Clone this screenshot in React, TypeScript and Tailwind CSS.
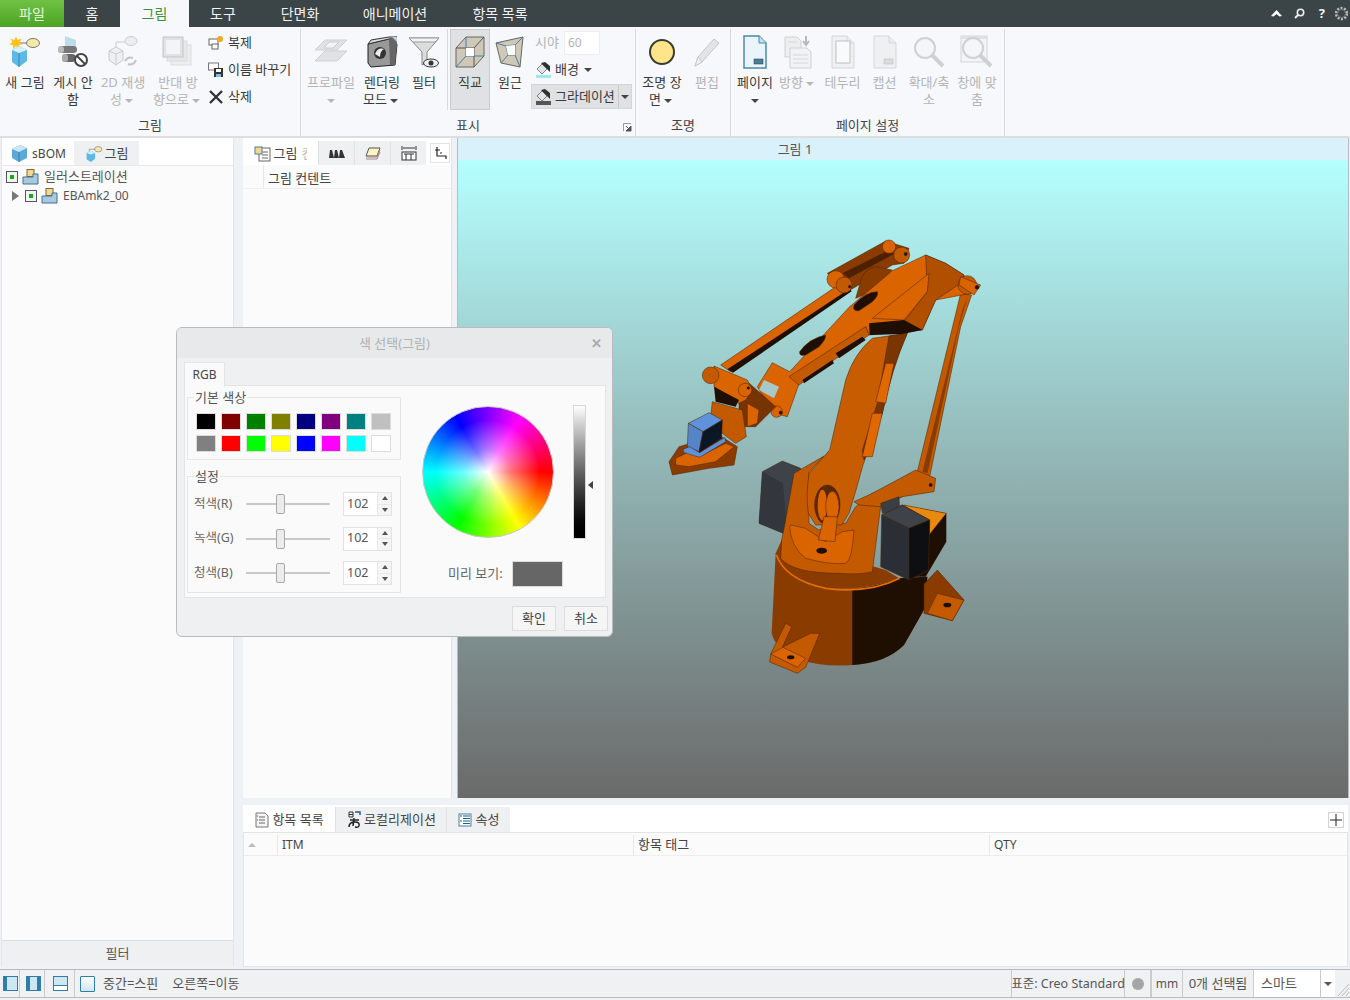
import React from "react";

const FONT = "font-['Noto_Sans','Noto_Sans_CJK_KR',sans-serif]";

// ---- small ribbon icons ----
const NewViewIcon = () => (
  <svg width="34" height="34" viewBox="0 0 34 34">
    <ellipse cx="25" cy="8" rx="6.5" ry="4.5" fill="#f6e9a8" stroke="#777" />
    <path d="M8 8 L19 8" stroke="#777" />
    <path d="M8 1 L9.5 5 L14 3.5 L11.5 7 L15 9.5 L11 10 L11 14 L8 11 L5 14 L5 10 L1 9.5 L4.5 7 L2 3.5 L6.5 5Z" fill="#ffc21c" />
    <path d="M4 15 L11 11 L19 15 L19 26 L11 32 L4 27Z" fill="#5db8e6" />
    <path d="M4 15 L11 18 L19 15 L11 11Z" fill="#d7effa" />
    <path d="M11 18 L11 32" stroke="#2d88bb" />
  </svg>
);
const UnpublishIcon = () => (
  <svg width="34" height="34" viewBox="0 0 34 34">
    <path d="M9 1 L20 5 L20 14 L9 11Z" fill="#bcdcec" />
    <rect x="2" y="11" width="19" height="7" rx="3.5" fill="#777" />
    <rect x="6" y="19" width="14" height="8" rx="4" fill="#666" />
    <rect x="2" y="11" width="6" height="7" rx="3" fill="#bbb" />
    <rect x="6" y="19" width="6" height="8" rx="3" fill="#aaa" />
    <circle cx="25" cy="25" r="6" fill="#fff" stroke="#444" strokeWidth="2" />
    <path d="M21 21 L29 29" stroke="#444" strokeWidth="2" />
  </svg>
);
const Regen2DIcon = () => (
  <svg width="34" height="34" viewBox="0 0 34 34" opacity=".4">
    <ellipse cx="25" cy="6" rx="6" ry="4.5" fill="#ddd" stroke="#888" />
    <path d="M10 7 L19 7 M10 7 L10 13" stroke="#888" />
    <path d="M3 16 L10 12 L17 16 L17 25 L10 30 L3 25Z" fill="#e6e6e6" stroke="#888" />
    <path d="M3 16 L10 19 L17 16 M10 19 L10 30" stroke="#888" fill="none" />
    <path d="M19 26 Q22 21 27 23 M30 25 Q27 31 22 29" stroke="#777" strokeWidth="2" fill="none" />
  </svg>
);
const FlipIcon = () => (
  <svg width="34" height="34" viewBox="0 0 34 34" opacity=".35">
    <rect x="10" y="10" width="20" height="20" fill="#ddd" stroke="#aaa" />
    <rect x="6" y="6" width="20" height="20" fill="#ccc" stroke="#aaa" />
    <rect x="2" y="2" width="20" height="20" fill="#bbb" stroke="#666" />
    <rect x="5" y="5" width="14" height="14" fill="#eee" />
  </svg>
);
const ProfileIcon = () => (
  <svg width="36" height="30" viewBox="0 0 36 30" opacity=".35">
    <path d="M12 3 L34 3 L24 13 L2 13Z M12 14 L34 14 L24 24 L2 24Z" fill="#bbb" stroke="#888" />
    <path d="M16 5 L26 5 L20 11 L11 11Z" fill="#eee" stroke="#777" />
  </svg>
);
const RenderIcon = () => (
  <svg width="34" height="34" viewBox="0 0 34 34">
    <path d="M3 9 L24 4 L32 9 L30 30 L6 32 L3 28Z" fill="#999" stroke="#222" />
    <path d="M3 9 L24 4 L32 2 L24 2 L6 5Z" fill="#ddd" stroke="#333" />
    <path d="M24 4 L32 2 L32 9 L30 30 L25 30Z" fill="#666" />
    <path d="M27 2 L32 2 L32 7Z" fill="#b9d1dc" />
    <circle cx="15" cy="18" r="6" fill="#333" />
    <path d="M10 19 Q13 12 19 14 Q15 16 15 22Z" fill="#eee" />
  </svg>
);
const FilterIcon = () => (
  <svg width="34" height="34" viewBox="0 0 34 34">
    <path d="M2 3 L32 3 L20 17 L20 28 L15 30 L15 17Z" fill="#dcdcdc" stroke="#888" />
    <path d="M2 3 L32 3 L28 7 L6 7Z" fill="#f3f3f3" stroke="#999" />
    <ellipse cx="24" cy="28" rx="7.5" ry="4" fill="#eee" stroke="#333" />
    <circle cx="24" cy="28" r="2.5" fill="#333" />
  </svg>
);
const OrthoIcon = () => (
  <svg width="30" height="32" viewBox="0 0 30 32">
    <path d="M1 12 L11 1 L29 1 L29 20 L19 31 L1 31Z" fill="#cfc8b6" stroke="#666" />
    <path d="M1 12 L19 12 L19 31 M19 12 L29 1" fill="none" stroke="#555" />
    <path d="M11 1 L11 20 L1 31 M11 20 L29 20" fill="none" stroke="#3f7fb5" />
    <path d="M11 12 L19 12 L19 20 L11 20Z" fill="#fff" />
  </svg>
);
const PerspIcon = () => (
  <svg width="30" height="32" viewBox="0 0 30 32">
    <path d="M1 7 L28 1 L25 31 L6 27Z" fill="#cfc8b6" stroke="#666" />
    <path d="M1 7 L11 10 L20 9 L28 1 M11 10 L13 19 L6 27 M20 9 L20 19 L25 31 M13 19 L20 19" fill="none" stroke="#4b7ea8" />
    <path d="M11 10 L20 9 L20 19 L13 19Z" fill="#fff" />
  </svg>
);
const PaintIcon = ({ base = "#9ee7f2", tall = false }: { base?: string; tall?: boolean }) => (
  <svg width="17" height="17" viewBox="0 0 17 17">
    <path d="M2 8 L7 3 L12 8 L7 13Z" fill="#e4e4e4" stroke="#666" strokeWidth=".8" />
    <path d="M6 2 L10 1 L15 5 L15 11 L12 8 Z" fill="#2e3236" />
    <rect x="1" y={tall ? 13 : 14} width="15" height={tall ? 4 : 3} fill={base} />
  </svg>
);
const LightIcon = () => (
  <svg width="28" height="28" viewBox="0 0 28 28">
    <circle cx="14" cy="14" r="12" fill="#ffe58a" stroke="#3b3b30" strokeWidth="2" />
  </svg>
);
const PencilIcon = () => (
  <svg width="28" height="32" viewBox="0 0 28 32" opacity=".45">
    <path d="M2 30 L5 21 L21 3 L26 7 L9 26Z" fill="#ccc" stroke="#888" />
    <path d="M2 30 L5 21 L9 26Z" fill="#eee" stroke="#888" />
  </svg>
);
const PageIcon = ({ dim = false, tag = false, inner = false }: { dim?: boolean; tag?: boolean; inner?: boolean }) => (
  <svg width="24" height="34" viewBox="0 0 24 34" opacity={dim ? 0.35 : 1}>
    <path d="M1 1 L16 1 L23 8 L23 33 L1 33Z" fill={dim ? "#e4e4e4" : "#eaf5fb"} stroke={dim ? "#999" : "#4a8aac"} strokeWidth={dim ? 1 : 1.5} />
    <path d="M16 1 L16 8 L23 8" fill="#c4dfee" stroke={dim ? "#999" : "#4a8aac"} />
    {inner && <rect x="5" y="6" width="14" height="22" fill="#fff" stroke="#555" />}
    {tag && <rect x="11" y="24" width="9" height="5" fill={dim ? "#aaa" : "#4a7f9c"} stroke="#333" strokeWidth=".5" />}
  </svg>
);
const OrientIcon = () => (
  <svg width="28" height="34" viewBox="0 0 28 34" opacity=".35">
    <path d="M1 2 L13 2 L17 6 L17 22 L1 22Z" fill="#ddd" stroke="#888" />
    <path d="M6 13 L23 13 L27 17 L27 33 L6 33Z" fill="#e8e8e8" stroke="#888" />
    <path d="M9 20 L24 20 M9 24 L24 24 M9 28 L24 28 M4 7 L13 7" stroke="#999" />
    <path d="M22 1 L22 8 M19 6 L22 10 L25 6" stroke="#444" strokeWidth="2" fill="none" />
  </svg>
);
const ZoomIcon = ({ frame = false }: { frame?: boolean }) => (
  <svg width="34" height="34" viewBox="0 0 34 34" opacity=".3">
    {frame && <rect x="1" y="1" width="26" height="26" fill="#eee" stroke="#888" />}
    {frame && <rect x="1" y="1" width="26" height="3" fill="#aaa" />}
    <circle cx="13" cy="13" r="10" fill="#f3f3f3" stroke="#777" strokeWidth="2" />
    <path d="M20 20 L31 31" stroke="#777" strokeWidth="4" />
  </svg>
);
const ViewSmallIcon = () => (
  <svg width="18" height="18" viewBox="0 0 34 34">
    <ellipse cx="25" cy="8" rx="7" ry="5" fill="#f6e9a8" stroke="#666" />
    <path d="M8 8 L19 8 M8 8 L8 13" stroke="#666" />
    <path d="M3 15 L11 11 L19 15 L19 26 L11 32 L3 27Z" fill="#5db8e6" />
    <path d="M3 15 L11 18 L19 15 L11 11Z" fill="#d7effa" />
  </svg>
);
const CubeIcon = () => (
  <svg width="17" height="17" viewBox="0 0 17 17">
    <path d="M1 4 L9 0 L16 3 L16 13 L8 17 L1 13Z" fill="#5aa9d8" />
    <path d="M1 4 L9 0 L16 3 L8 7Z" fill="#cbe7f6" />
    <path d="M8 7 L8 17" stroke="#2f7ea9" />
  </svg>
);
const TreeIcons = () => (
  <span className="flex items-center gap-[4px]">
    <span className="flex h-[12px] w-[12px] items-center justify-center border border-[#556] bg-[#f3f3f3]">
      <span className="h-[4px] w-[4px] bg-[#10b010]" />
    </span>
    <svg width="17" height="16" viewBox="0 0 17 16">
      <rect x="5" y="0.5" width="7" height="7" fill="#f1d88d" stroke="#7a6a3a" />
      <path d="M1 8 L11 8 L11 5 L16 5 L16 15 L1 15Z" fill="#a8c9de" stroke="#466f8c" />
    </svg>
  </span>
);

const Caret = ({ dim = false }: { dim?: boolean }) => (
  <span className={`mx-[3px] inline-block h-0 w-0 border-x-[4px] border-t-[4px] border-x-transparent align-middle ${dim ? "border-t-[#b5b5b5]" : "border-t-[#444]"}`} />
);

// ---- ribbon parts ----
function RibbonButton({
  icon,
  lines,
  width,
  dim = false,
  caret = false,
  active = false,
}: {
  icon: React.ReactNode;
  lines: string[];
  width: string;
  dim?: boolean;
  caret?: boolean;
  active?: boolean;
}) {
  return (
    <div className={`flex shrink-0 flex-col items-center ${width} ${active ? "h-[81px] border border-[#c9cbcd] bg-[#dfe1e3]" : ""}`}>
      <div className={`flex items-center justify-center ${active ? "h-[44px]" : "h-[45px]"}`}>{icon}</div>
      <div className={`text-center text-[13px] leading-[17px] ${dim ? "text-[#b4b4b4]" : "text-[#3a3a3a]"}`}>
        {lines.map((l, i) => (
          <div key={i} className="whitespace-nowrap">
            {l}
            {caret && i === lines.length - 1 && <Caret dim={dim} />}
          </div>
        ))}
      </div>
    </div>
  );
}

function SmallAction({ icon, label }: { icon: React.ReactNode; label: string }) {
  return (
    <div className="flex h-[27px] items-center gap-[3px] text-[13px] text-[#3a3a3a]">
      <span className="flex w-[18px] justify-center">{icon}</span>
      {label}
    </div>
  );
}

function RibbonGroup({ width, label, children, launcher = false }: { width: string; label: string; children: React.ReactNode; launcher?: boolean }) {
  return (
    <div className={`relative flex h-[108px] shrink-0 flex-col border-r border-[#d6d8da] ${width}`}>
      <div className="flex h-[86px] items-start">{children}</div>
      <div className="flex h-[20px] items-center justify-center pt-[1px] text-[13px] text-[#444]">{label}</div>
      {launcher && (
        <svg className="absolute right-[3px] bottom-[5px]" width="9" height="9" viewBox="0 0 9 9">
          <path d="M0.5 8 L0.5 0.5 L8 0.5" fill="none" stroke="#999" />
          <path d="M3 3 L7 7 M8 3 L8 8 L3 8Z" stroke="#555" fill="#555" />
        </svg>
      )}
    </div>
  );
}

function Tabs() {
  return (
    <div className="flex h-[27px] items-stretch bg-[#3b4446] text-[14px] text-[#f2f2f2]">
      <div className="flex w-[64px] items-center justify-center bg-gradient-to-b from-[#6fc243] to-[#4da325] text-[#e8f5dc]">파일</div>
      <div className="flex w-[56px] items-center justify-center">홈</div>
      <div className="flex w-[69px] items-center justify-center bg-[#f6f8fb] text-[#3f8f3a]">그림</div>
      <div className="flex w-[68px] items-center justify-center">도구</div>
      <div className="flex w-[86px] items-center justify-center">단면화</div>
      <div className="flex w-[104px] items-center justify-center">애니메이션</div>
      <div className="flex w-[106px] items-center justify-center">항목 목록</div>
      <div className="ml-auto flex items-center">
        <svg className="mr-[12px]" width="11" height="7" viewBox="0 0 11 7"><path d="M5.5 0 L11 6 L8.5 6.5 L5.5 4 L2.5 6.5 L0 6Z" fill="#fff" /></svg>
        <svg className="mr-[14px]" width="11" height="11" viewBox="0 0 11 11"><circle cx="6.5" cy="4.5" r="3.2" fill="none" stroke="#eee" strokeWidth="1.6" /><path d="M4 7 L1 10" stroke="#eee" strokeWidth="2" /></svg>
        <span className="mr-[9px] text-[13px] font-bold">?</span>
        <svg className="mr-[1px]" width="15" height="15" viewBox="0 0 15 15"><circle cx="7.5" cy="7.5" r="5.4" fill="none" stroke="#bbb" strokeWidth="2.6" strokeDasharray="2 1.4" /><circle cx="7.5" cy="7.5" r="4" fill="none" stroke="#777" /></svg>
      </div>
    </div>
  );
}

function Ribbon() {
  return (
    <div className="flex h-[111px] items-start border-b-2 border-[#dcdee0] bg-[#f6f8fb] pt-[2px]">
      <RibbonGroup width="w-[301px]" label="그림">
        <div className="w-px" />
        <RibbonButton width="w-[48px]" icon={<NewViewIcon />} lines={["새 그림"]} />
        <RibbonButton width="w-[48px]" icon={<UnpublishIcon />} lines={["게시 안", "함"]} />
        <RibbonButton width="w-[52px]" dim caret icon={<Regen2DIcon />} lines={["2D 재생", "성"]} />
        <RibbonButton width="w-[58px]" dim caret icon={<FlipIcon />} lines={["반대 방", "향으로"]} />
        <div className="flex flex-col">
          <SmallAction
            label="복제"
            icon={
              <svg width="16" height="14" viewBox="0 0 16 14">
                <rect x="1" y="3" width="9" height="6" fill="#fff" stroke="#666" />
                <rect x="4" y="8" width="6" height="5" fill="#fff" stroke="#666" />
                <circle cx="12" cy="3" r="3" fill="#f5a623" />
              </svg>
            }
          />
          <SmallAction
            label="이름 바꾸기"
            icon={
              <svg width="16" height="15" viewBox="0 0 16 15">
                <rect x="0.5" y="1" width="10" height="7" fill="#fff" stroke="#777" />
                <rect x="6" y="6" width="9" height="9" fill="#333" />
                <rect x="8" y="7" width="5" height="3" fill="#fff" />
                <rect x="8" y="12" width="5" height="3" fill="#7cc0e8" />
              </svg>
            }
          />
          <SmallAction
            label="삭제"
            icon={
              <svg width="14" height="14" viewBox="0 0 14 14">
                <path d="M1 1 L13 13 M13 1 L1 13" stroke="#333" strokeWidth="2.4" />
              </svg>
            }
          />
        </div>
      </RibbonGroup>

      <RibbonGroup width="w-[335px]" label="표시" launcher>
        <RibbonButton width="w-[60px]" dim caret icon={<ProfileIcon />} lines={["프로파일", ""]} />
        <RibbonButton width="w-[42px]" caret icon={<RenderIcon />} lines={["렌더링", "모드"]} />
        <RibbonButton width="w-[42px]" icon={<FilterIcon />} lines={["필터"]} />
        <div className="mx-[2px] h-[81px] w-px bg-[#d6d8da]" />
        <RibbonButton width="w-[40px]" active icon={<OrthoIcon />} lines={["직교"]} />
        <RibbonButton width="w-[40px]" icon={<PerspIcon />} lines={["원근"]} />
        <div className="mt-[1px] ml-[1px] flex w-[101px] flex-col text-[13px] text-[#3a3a3a]">
          <div className="flex h-[26px] items-center pl-[4px] text-[#b4b4b4]">
            시야
            <span className="ml-[5px] flex h-[24px] w-[36px] items-center border border-[#eceef0] bg-white pl-[3px] text-[12px]">60</span>
          </div>
          <div className="flex h-[27px] items-center pl-[4px]">
            <PaintIcon />
            <span className="ml-[3px]">배경</span>
            <span className="ml-[2px]"><Caret /></span>
          </div>
          <div className="mt-[1px] flex h-[25px] items-center border border-[#d3d5d7] bg-[#dfe1e3] pl-[3px]">
            <PaintIcon base="#555" tall />
            <span className="ml-[3px]">그라데이션</span>
            <span className="ml-auto flex h-full w-[13px] items-center justify-center border-l border-[#c9cbcd]">
              <span className="h-0 w-0 border-x-[4px] border-t-[4px] border-x-transparent border-t-[#444]" />
            </span>
          </div>
        </div>
      </RibbonGroup>

      <RibbonGroup width="w-[95px]" label="조명">
        <div className="w-[2px]" />
        <RibbonButton width="w-[48px]" caret icon={<LightIcon />} lines={["조명 장", "면"]} />
        <RibbonButton width="w-[42px]" dim icon={<PencilIcon />} lines={["편집"]} />
      </RibbonGroup>

      <RibbonGroup width="w-[274px]" label="페이지 설정">
        <div className="w-[4px]" />
        <RibbonButton width="w-[40px]" caret icon={<PageIcon tag />} lines={["페이지", ""]} />
        <RibbonButton width="w-[46px]" dim caret icon={<OrientIcon />} lines={["방향"]} />
        <RibbonButton width="w-[43px]" dim icon={<PageIcon dim inner />} lines={["테두리"]} />
        <RibbonButton width="w-[41px]" dim icon={<PageIcon dim tag />} lines={["캡션"]} />
        <RibbonButton width="w-[48px]" dim icon={<ZoomIcon />} lines={["확대/축", "소"]} />
        <RibbonButton width="w-[48px]" dim icon={<ZoomIcon frame />} lines={["창에 맞", "춤"]} />
      </RibbonGroup>
    </div>
  );
}

// ---- the robot model ----
function RobotModel() {
  const o = "#d96400";
  const om = "#c45a00";
  const od = "#8a3c00";
  const k = "#1f0f03";
  return (
    <svg width="340" height="450" viewBox="0 0 1020 1350">
      <g stroke="#4a2000" strokeWidth="1.5" strokeLinejoin="round">
        {/* back servo */}
        <path d="M310 725 L370 693 L425 715 L445 890 L385 915 L300 880Z" fill="#3e4249" />
        <path d="M310 725 L300 880 L385 915 L372 760Z" fill="#33363c" stroke="none" />
        {/* base */}
        <path d="M350 970 L338 1210 Q350 1260 420 1290 Q500 1312 580 1305 Q680 1300 735 1245 L800 1130 L805 1040 L720 1045 Q600 1090 470 1070 Q370 1040 350 970Z" fill={od} stroke="none" />
        <path d="M580 1078 L580 1305 Q680 1300 735 1245 L800 1130 L805 1040 L720 1045 Q650 1072 580 1078Z" fill={k} stroke="none" />
        <path d="M350 970 L368 930 L680 1020 L720 1045 Q600 1090 470 1070 Q370 1040 350 970Z" fill={od} stroke="none" />
        <path d="M352 975 Q380 1050 500 1075 Q630 1092 722 1045" fill="none" stroke="#e66c00" strokeWidth="5" />
        {/* side foot right */}
        <path d="M835 1020 L915 1110 L880 1172 L795 1150 L795 1062Z" fill={od} />
        <path d="M835 1090 L915 1110 L880 1172 L805 1150Z" fill={om} />
        <ellipse cx="865" cy="1125" rx="12" ry="7" fill={k} stroke="none" />
        {/* block behind right servo */}
        <path d="M730 825 L862 850 L862 935 L800 1040 L740 1040Z" fill={k} stroke="none" />
        <path d="M735 825 L862 850 L810 915 L730 870Z" fill="#e88a10" />
        {/* foot front */}
        <path d="M380 1180 L398 1190 L370 1252 L455 1210 L482 1210 L440 1312 L415 1330 L332 1296 L335 1272Z" fill={om} />
        <path d="M335 1272 L372 1252 L440 1285 L415 1312Z" fill={o} />
        <ellipse cx="395" cy="1282" rx="11" ry="6" fill={k} stroke="none" />
        {/* cradle */}
        <path d="M405 730 L495 678 L450 725 L450 880 L480 900 L530 880 L560 880 L590 830 L640 790 L725 755 L730 800 L665 830 L640 1025 Q600 1035 540 1030 Q400 1030 365 985 L368 930 L378 880Z" fill={om} />
        <path d="M392 890 Q395 950 440 985 Q510 1005 560 1000 Q580 990 585 900 L550 905 L500 935 L440 895 L395 885Z" fill={o} />
        <ellipse cx="488" cy="962" rx="16" ry="9" fill={k} stroke="none" />
        {/* main column */}
        <path d="M450 730 L512 660 L560 450 Q585 370 640 325 L745 310 Q700 410 670 550 L612 705 Q592 780 570 850 L548 885 L470 885 L448 850 Q440 800 450 730Z" fill="#c85c00" />
        <path d="M690 318 L745 310 Q700 410 670 550 L615 690 L610 660 L655 520 Q672 420 690 318Z" fill="#7a3500" />
        <path d="M680 400 L705 400 L680 520 L650 515Z M640 550 L670 550 L640 680 L610 680Z" fill="#e06800" />
        {/* pivot */}
        <ellipse cx="505" cy="825" rx="38" ry="60" fill="#5a2800" />
        <ellipse cx="490" cy="825" rx="14" ry="46" fill={o} stroke="none" />
        <ellipse cx="520" cy="830" rx="20" ry="46" fill={o} />
        <path d="M495 860 L535 860 L528 935 L478 930Z" fill={o} />
        {/* rear link right */}
        <path d="M905 190 L938 195 L905 290 L812 740 L775 725Z" fill={om} />
        <path d="M910 240 L925 200 L900 290 L806 730 L790 725Z" fill={od} stroke="none" />
        <path d="M585 815 L640 790 L770 720 L830 745 L825 785 L730 800 L665 830 L600 825Z" fill={om} />
        <circle cx="815" cy="765" r="5" fill={k} />
        {/* right servo */}
        <path d="M665 820 L720 800 L722 840 L670 850Z" fill="#3a3e45" />
        <path d="M668 855 L730 825 L812 870 L808 1020 L750 1050 L665 1010Z" fill="#2b2f35" />
        <path d="M668 855 L730 825 L812 870 L750 895Z" fill="#3e4249" />
        <path d="M750 895 L812 870 L808 1020 L750 1050Z" fill="#0d0f12" />
        {/* top rear link */}
        <path d="M505 130 L680 33 L750 55 L735 100 L700 105 L565 185Z" fill={od} />
        <path d="M550 130 L690 60 L705 72 L570 145Z" fill="#4d2100" stroke="none" />
        <path d="M600 170 Q610 115 650 110 L700 120 L640 185 L590 205Z" fill="#8a3c00" />
        <circle cx="690" cy="50" r="20" fill={o} />
        <circle cx="728" cy="75" r="24" fill={om} />
        <circle cx="740" cy="72" r="5" fill={k} />
        {/* upper rod */}
        <path d="M185 405 L545 160 L578 172 L215 425Z" fill={o} />
        <path d="M205 418 L572 176 L578 184 L222 428Z" fill={k} stroke="none" />
        <circle cx="530" cy="148" r="26" fill={o} />
        <circle cx="555" cy="165" r="24" fill={om} />
        <circle cx="572" cy="170" r="4" fill={k} />
        {/* big upper arm */}
        <path d="M340 398 L392 425 L570 232 L700 122 L800 75 L860 100 L915 135 L935 190 L830 210 L790 300 L630 315 L620 290 L525 372 L420 462 L385 560 L340 548 L295 470Z" fill={o} />
        <path d="M800 75 L860 100 L915 135 L905 160 L830 210 L790 300 L735 275 L805 185Z" fill="#b04f00" />
        <path d="M640 265 L810 130 L805 185 L735 270Z" fill="#d96400" />
        <path d="M630 280 L735 270 L790 300 L730 312 L632 315Z" fill={k} stroke="none" />
        <path d="M390 440 L620 290 L630 315 L420 465Z" fill={om} />
        <path d="M530 370 L610 320 L620 330 L540 385Z M430 450 L520 390 L525 400 L435 460Z" fill={k} stroke="none" />
        <path d="M585 225 Q620 185 655 185 Q660 195 640 215 L600 242 Q580 245 585 225Z" fill={k} />
        <path d="M422 365 Q450 325 500 315 Q500 330 480 350 L440 375 Q420 380 422 365Z" fill={k} />
        <path d="M315 450 L360 470 L345 505 L300 480Z" fill="#a8c9c9" stroke="none" />
        <circle cx="353" cy="545" r="17" fill={o} />
        <circle cx="365" cy="548" r="5" fill={k} />
        <circle cx="925" cy="165" r="28" fill={om} />
        <path d="M905 140 L965 165 L945 195 L900 165Z" fill={o} />
        <circle cx="954" cy="172" r="6" fill={k} />
        {/* wrist */}
        <path d="M240 520 L262 452 L350 530 L290 590 L240 590Z" fill="#783400" />
        <path d="M165 408 L265 450 L280 480 L260 510 L240 520 L165 470Z" fill={o} />
        <circle cx="155" cy="436" r="25" fill={om} />
        <circle cx="258" cy="480" r="20" fill={o} />
        <circle cx="268" cy="474" r="4" fill={k} />
        <path d="M160 515 L250 540 L262 620 L230 640 L190 610 L155 560Z" fill={om} />
        <path d="M165 470 L240 510 L230 530 L170 515Z" fill={k} stroke="none" />
        <path d="M265 520 L300 540 L295 580 L265 590Z" fill={o} />
        {/* gripper */}
        <path d="M30 695 L60 650 L180 615 L235 650 L225 705 L150 715 L40 735Z" fill={od} />
        <path d="M50 685 L90 665 L120 680 L200 640 L225 650 L170 695 L90 710 L50 705Z" fill={o} />
        {/* blue servo */}
        <path d="M88 580 L150 548 L190 570 L132 605 Z" fill="#5f92dc" />
        <path d="M88 580 L132 605 L120 665 L85 650Z" fill="#5485c8" />
        <path d="M132 605 L190 570 L188 625 L120 668Z" fill="#0b1725" />
        <path d="M72 658 L92 650 L122 668 L198 622 L200 635 L122 682 L75 668Z" fill="#5f92dc" />
      </g>
    </svg>
  );
}

// ---- colour dialog ----
const swatches = [
  "#000000", "#800000", "#008000", "#808000", "#000080", "#800080", "#008080", "#c0c0c0",
  "#808080", "#ff0000", "#00ff00", "#ffff00", "#0000ff", "#ff00ff", "#00ffff", "#ffffff",
];

function SliderRow({ label }: { label: string }) {
  return (
    <div className="flex h-[24px] items-center">
      <span className="w-[52px] text-[12.5px] text-[#666]">{label}</span>
      <div className="relative h-[2px] w-[84px] bg-[#c8c8c8]">
        <div className="absolute top-[-9px] left-[30px] h-[20px] w-[9px] rounded-[2px] border border-[#aaa] bg-[#ececec]" />
      </div>
      <div className="ml-[13px] flex h-[24px] w-[49px] border border-[#e2e2e2] bg-white">
        <span className="flex w-[33px] items-center pl-[3px] text-[12.5px] text-[#555]">102</span>
        <span className="flex flex-1 flex-col border-l border-[#e8e8e8] bg-[#f5f5f5]">
          <span className="flex flex-1 items-center justify-center border-b border-[#e8e8e8]">
            <span className="h-0 w-0 border-x-[3px] border-b-[4px] border-x-transparent border-b-[#555]" />
          </span>
          <span className="flex flex-1 items-center justify-center">
            <span className="h-0 w-0 border-x-[3px] border-t-[4px] border-x-transparent border-t-[#555]" />
          </span>
        </span>
      </div>
    </div>
  );
}

function ColorDialog() {
  return (
    <div className="absolute top-[189px] left-[176px] z-10 flex h-[310px] w-[437px] flex-col overflow-hidden rounded-[6px] border border-[#b9bbbd] bg-[#eff0f2]">
      <div className="relative flex h-[30px] shrink-0 items-center justify-center bg-[#e8e9eb] pt-[2px] text-[13px] text-[#b0b2b4]">
        색 선택(그림)
        <span className="absolute top-[7px] right-[10px] text-[13px] leading-[16px] font-bold text-[#a8aaac]">✕</span>
      </div>
      <div className="flex h-[24px] px-[7px] pt-[4px]">
        <div className="z-10 flex h-[25px] w-[41px] items-center justify-center border border-b-0 border-[#e4e5e7] bg-[#fafafa] text-[12px] text-[#444]">RGB</div>
      </div>
      <div className="mr-[6px] ml-[7px] mt-[3px] flex h-[213px] border border-[#e4e5e7] bg-[#fafafa] pt-[2px] pl-[2px]">
        <div className="flex w-[214px] flex-col">
          <fieldset className="h-[72px] border border-[#e6e6e6]">
            <legend className="ml-[6px] px-[1px] text-[13px] leading-[19px] text-[#555]">기본 색상</legend>
            <div className="mt-[6px] ml-[8px] grid w-[195px] grid-cols-8 gap-x-[5px] gap-y-[5px]">
              {swatches.map((c) => (
                <div key={c} className="h-[17px] border border-[#dcdcdc]" style={{ backgroundColor: c }} />
              ))}
            </div>
          </fieldset>
          <fieldset className="mt-[7px] h-[126px] border border-[#e6e6e6]">
            <legend className="ml-[6px] px-[1px] text-[13px] leading-[19px] text-[#555]">설정</legend>
            <div className="mt-[6px] ml-[6px] flex flex-col gap-[10.5px]">
              <SliderRow label="적색(R)" />
              <SliderRow label="녹색(G)" />
              <SliderRow label="청색(B)" />
            </div>
          </fieldset>
        </div>
        <div className="ml-[21px] flex flex-col">
          <div className="flex">
            <div className="relative mt-[18px] h-[132px] w-[132px] rounded-full border border-[#c8c8c8] bg-[conic-gradient(from_30deg,#ff00ff,#ff0000,#ffff00,#00ff00,#00ffff,#0000ff,#ff00ff)]">
              <div className="absolute inset-0 rounded-full bg-[radial-gradient(circle_closest-side,#ffffff_0%,rgba(255,255,255,0.45)_35%,rgba(255,255,255,0)_80%)]" />
            </div>
            <div className="mt-[17px] ml-[19px] h-[134px] w-[13px] border border-[#d8d8d8] bg-gradient-to-b from-white to-black" />
            <div className="mt-[93px] ml-[2px] h-0 w-0 border-y-[4px] border-r-[5px] border-y-transparent border-r-[#444]" />
          </div>
          <div className="mt-[22px] flex items-center">
            <span className="ml-[26px] text-[13px] text-[#666]">미리 보기:</span>
            <div className="ml-[9px] h-[26px] w-[51px] border border-[#dcdcdc] bg-[#666666]" />
          </div>
        </div>
      </div>
      <div className="mt-[8px] flex justify-end gap-[8px] pr-[4px]">
        <div className="flex h-[25px] w-[44px] items-center justify-center border border-[#dcdcdc] bg-[#f5f5f5] pt-[1px] text-[13px] text-[#444]">확인</div>
        <div className="flex h-[25px] w-[44px] items-center justify-center border border-[#dcdcdc] bg-[#f5f5f5] pt-[1px] text-[13px] text-[#444]">취소</div>
      </div>
    </div>
  );
}

// ---- panels ----
function LeftPanel() {
  return (
    <div className="mb-[3px] ml-[1px] flex w-[233px] shrink-0 flex-col border-x border-[#e2e4e6] bg-[#fbfbfb]">
      <div className="flex h-[27px] items-end bg-white pl-[1px] text-[13px] text-[#444]">
        <div className="flex h-[24px] w-[71px] items-center justify-center gap-[4px] bg-white pt-[1px]">
          <CubeIcon />
          <span className="text-[12px]">sBOM</span>
        </div>
        <div className="flex h-[24px] w-[65px] items-center justify-center gap-[2px] bg-[#eff0f2] pt-[1px]">
          <ViewSmallIcon />
          그림
        </div>
      </div>
      <div className="flex-1 border-t border-[#e6e8ea] bg-[#fbfbfb] pt-[1px] pl-[4px] text-[13px] text-[#555]">
        <div className="flex h-[19px] items-center gap-[5px]">
          <TreeIcons />
          일러스트레이션
        </div>
        <div className="flex h-[19px] items-center gap-[6px]">
          <span className="ml-[6px] h-0 w-0 border-y-[5px] border-l-[7px] border-y-transparent border-l-[#777]" />
          <span className="flex items-center gap-[5px]">
            <TreeIcons />
            <span className="text-[12px]">EBAmk2_00</span>
          </span>
        </div>
      </div>
      <div className="flex h-[26px] items-center justify-center border-t border-[#dcdee0] bg-[#eff0f2] text-[13px] text-[#555]">필터</div>
    </div>
  );
}

function ContentPanel() {
  return (
    <div className="flex w-[209px] shrink-0 flex-col border-r border-[#e2e4e6] bg-[#fbfbfb]">
      <div className="flex h-[27px] items-end bg-white text-[13px] text-[#444]">
        <div className="flex h-[24px] w-[75px] items-center justify-center gap-[3px] bg-white pt-[1px]">
          <svg width="17" height="16" viewBox="0 0 17 16">
            <rect x="5" y="2" width="11" height="13" fill="#fff" stroke="#666" />
            <path d="M8 6 L14 6 M8 9 L14 9 M8 12 L14 12" stroke="#666" />
            <rect x="1" y="1" width="7" height="7" fill="#f1d88d" stroke="#4a7f9c" />
          </svg>
          그림
          <span className="ml-[1px] w-[6px] overflow-hidden whitespace-nowrap text-[#bbb]">컨</span>
        </div>
        <div className="flex h-[24px] w-[36px] items-center justify-center border-l border-[#e0e2e4] bg-[#eff0f2]">
          <svg width="16" height="9" viewBox="0 0 16 9"><path d="M0 9 L1 1 L3 1 L5 9Z M5 9 L6 1 L8 1 L10 9Z M10 9 L11 1 L13 1 L16 9Z" fill="#333" /></svg>
        </div>
        <div className="flex h-[24px] w-[36px] items-center justify-center border-l border-[#e0e2e4] bg-[#eff0f2]">
          <svg width="16" height="14" viewBox="0 0 16 14"><path d="M4 2 L15 2 L12 10 L1 10Z" fill="#fff3c4" stroke="#555" /><path d="M1 11 L12 11 L15 4 M1 13 L12 13 L15 6" fill="none" stroke="#a88" /></svg>
        </div>
        <div className="flex h-[24px] w-[36px] items-center justify-center border-l border-[#e0e2e4] bg-[#eff0f2]">
          <svg width="16" height="16" viewBox="0 0 16 16"><path d="M1 1 L1 5 M15 1 L15 5 M2 3 L14 3" stroke="#333" /><rect x="1" y="7" width="14" height="8" fill="#fff" stroke="#333" /><path d="M3 9 L13 9 M5 9 L5 15 M10 9 L10 15" stroke="#333" /></svg>
        </div>
        <div className="mb-[2px] ml-[4px] flex h-[20px] w-[20px] items-center justify-center border border-[#e0e2e4] bg-white">
          <svg width="13" height="13" viewBox="0 0 13 13"><path d="M3 0 L3 9 L12 9 L12 12 M1 3 L6 3 M6 6 L8 6" fill="none" stroke="#222" strokeWidth="1.2" /></svg>
        </div>
      </div>
      <div className="flex h-[24px] items-stretch border-b border-[#eeeeee] bg-[#fbfbfb] pl-[20px] text-[13px] text-[#444]">
        <span className="flex items-center border-l border-[#e8e8e8] pt-[5px] pl-[4px]">그림 컨텐트</span>
      </div>
      <div className="flex-1" />
    </div>
  );
}

function Viewport() {
  return (
    <div className="flex min-w-0 flex-1 flex-col border-x border-[#b8bcc0]">
      <div className="flex h-[22px] items-center justify-center bg-[#d9f1fb] pt-[2px] pr-[216px] text-[13px] text-[#555]">그림 1</div>
      <div className="relative flex-1 bg-gradient-to-b from-[#b5ffff] to-[#6a6a6a]">
        <div className="absolute top-[70px] left-[201px]">
          <RobotModel />
        </div>
      </div>
    </div>
  );
}

function BottomPanel() {
  return (
    <div className="relative flex h-[162px] flex-col bg-white">
      <div className="flex h-[27px] items-end text-[13px] text-[#444]">
        <div className="flex h-[25px] w-[92px] items-center justify-center gap-[2px] bg-white pt-[1px]">
          <svg width="16" height="16" viewBox="0 0 16 16"><path d="M2 1 L11 1 L14 4 L14 15 L2 15Z" fill="#f5f5f5" stroke="#777" /><path d="M5 5 L11 5 M5 8 L11 8 M5 11 L11 11" stroke="#666" /><path d="M3 4 L4 4 M3 8 L4 8" stroke="#c33" /></svg>
          항목 목록
        </div>
        <div className="flex h-[25px] w-[111px] items-center justify-center gap-[2px] border-l border-[#e0e2e4] bg-[#eff0f2]">
          <svg width="16" height="18" viewBox="0 0 16 18">
            <path d="M3 1 L7 1 L7 6 L3 6Z M3 3.5 L7 3.5" fill="none" stroke="#333" />
            <path d="M9 1 L14 1 L14 4" fill="none" stroke="#1f5f86" strokeWidth="1.5" />
            <path d="M4 9 L13 9 M8 7 L7 15 M3 16 Q3 11 9 11 Q14 11 13 15 Q12 17 9 16" fill="none" stroke="#222" strokeWidth="1.5" />
          </svg>
          로컬리제이션
        </div>
        <div className="flex h-[25px] w-[64px] items-center justify-center gap-[4px] border-l border-[#e0e2e4] bg-[#eff0f2] pt-[1px]">
          <svg width="14" height="14" viewBox="0 0 14 14"><rect x="1" y="1" width="12" height="12" fill="#fff" stroke="#4a7f9c" /><path d="M5 3 L12 3 M5 5.5 L12 5.5 M5 8 L12 8 M5 10.5 L12 10.5" stroke="#1f5f86" /><path d="M2 3 L4 3 M2 8 L4 8" stroke="#1f5f86" /></svg>
          속성
        </div>
        <div className="mr-[4px] mb-[4px] ml-auto flex h-[16px] w-[16px] items-center justify-center border border-[#d0d2d4] bg-white">
          <svg width="12" height="12" viewBox="0 0 12 12"><path d="M6 0 L6 12 M0 6 L12 6" stroke="#222" /></svg>
        </div>
      </div>
      <div className="flex flex-1 flex-col border border-[#e2e4e6] bg-[#fbfbfb] text-[13px] text-[#444]">
        <div className="flex h-[23px] items-center border-b border-[#eeeeee] pt-[2px]">
          <div className="flex h-full w-[34px] items-center border-r border-[#e8e8e8] pl-[4px]">
            <span className="h-0 w-0 border-x-[4px] border-b-[4px] border-x-transparent border-b-[#bbb]" />
          </div>
          <div className="flex h-full w-[356px] items-center border-r border-[#e8e8e8] pl-[4px] text-[12px]">ITM</div>
          <div className="flex h-full w-[356px] items-center border-r border-[#e8e8e8] pl-[4px]">항목 태그</div>
          <div className="pl-[4px] text-[12px]">QTY</div>
        </div>
      </div>
    </div>
  );
}

function StatusBar() {
  const seg = "flex h-full items-center border-r border-[#c9cbcd]";
  const layoutIcon = "h-[15px] w-[15px] border border-[#2f7ea9] bg-[#cfe6f3]";
  return (
    <div className="flex h-[29px] items-center border-y border-[#b8babc] bg-[#eff1f3] text-[13px] text-[#555]">
      <div className={`${seg} w-[20px] pl-[3px]`}>
        <div className={`${layoutIcon} border-l-[4px]`} />
      </div>
      <div className={`${seg} w-[25px] pl-[6px]`}>
        <div className={`${layoutIcon} border-x-[4px]`} />
      </div>
      <div className={`${seg} w-[30px] pl-[8px]`}>
        <div className="flex h-[15px] w-[15px] flex-col border border-[#2f7ea9] bg-[#cfe6f3]">
          <div className="mt-auto h-[5px] border-t border-[#2f7ea9] bg-white" />
        </div>
      </div>
      <div className="ml-[5px] h-[16px] w-[15px] rounded-[1px] border border-[#2f7ea9] bg-gradient-to-b from-white to-[#cfe6f3]" />
      <span className="ml-[8px] pt-[1px]">중간=스핀</span>
      <span className="ml-[14px] pt-[1px]">오른쪽=이동</span>
      <div className="ml-auto flex h-full items-center">
        <div className="flex h-full w-[114px] items-center justify-center border-x border-[#c9cbcd] pt-[1px] text-[12.5px] whitespace-nowrap">표준: Creo Standard</div>
        <div className="flex h-full w-[27px] items-center justify-center border-r-2 border-[#c9cbcd]">
          <div className="h-[12px] w-[12px] rounded-full bg-[#a4a6a8]" />
        </div>
        <div className="flex h-full w-[31px] items-center justify-center border-r border-[#c9cbcd] pt-[1px] text-[12px]">mm</div>
        <div className="flex h-full w-[70px] items-center justify-center pt-[1px]">0개 선택됨</div>
        <div className="flex h-full w-[67px] items-center border-l border-[#c9cbcd] bg-white pl-[7px]">스마트</div>
        <div className="flex h-full w-[15px] items-center justify-center border-l border-[#c9cbcd] bg-white">
          <span className="h-0 w-0 border-x-[4px] border-t-[4px] border-x-transparent border-t-[#555]" />
        </div>
        <svg width="15" height="27" viewBox="0 0 15 27"><path d="M14 14 L3 26 M14 18 L7 26 M14 22 L11 26" stroke="#bbb" /></svg>
      </div>
    </div>
  );
}

export default function App() {
  return (
    <div className={`h-[1000px] w-[1350px] overflow-hidden bg-[#eef2f6] ${FONT}`}>
      <Tabs />
      <Ribbon />
      <div className="relative flex h-[831px]">
        <LeftPanel />
        <div className="w-[9px] shrink-0" />
        <div className="flex min-w-0 flex-1 flex-col">
          <div className="flex h-[660px] bg-[#eef2f6]">
            <ContentPanel />
            <div className="w-[5px] shrink-0" />
            <Viewport />
            <div className="w-[1px]" />
          </div>
          <div className="mt-[7px] h-[162px] pr-[2px]">
            <BottomPanel />
          </div>
        </div>
        <ColorDialog />
      </div>
      <StatusBar />
    </div>
  );
}
